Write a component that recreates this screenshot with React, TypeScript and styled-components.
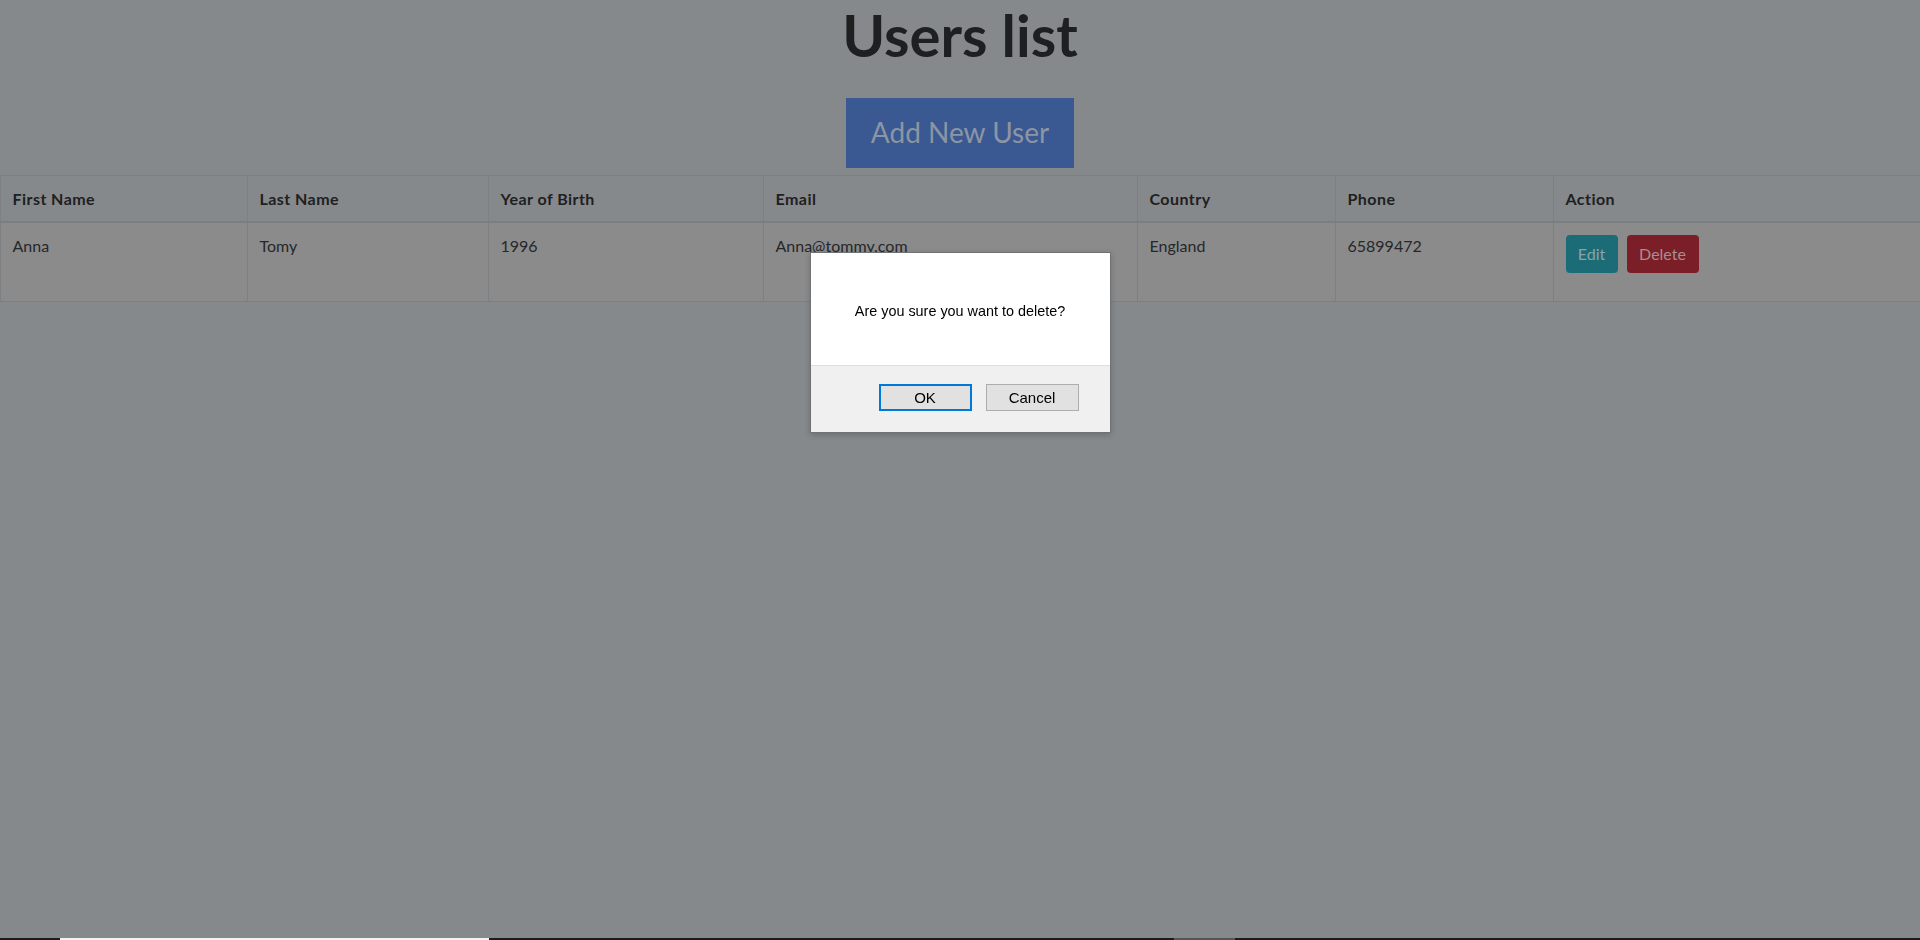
import React from "react";
import styled, { createGlobalStyle } from "styled-components";

const GlobalStyle = createGlobalStyle`
  html, body {
    margin: 0;
    padding: 0;
    background: #86898b;
  }
  * { box-sizing: border-box; }
`;

const Page = styled.div`
  min-height: 100vh;
  display: flex;
  flex-direction: column;
  font-family: Lato, "Open Sans", sans-serif;
  color: #1e2022;
  background: #86898b;
`;

const Main = styled.main`
  display: flex;
  flex-direction: column;
  align-items: center;
  flex: 1;
`;

const Title = styled.h1`
  margin: 0 0 28px;
  font-size: 58px;
  line-height: 1.2;
  font-weight: 700;
  color: #1d1f21;
`;

const AddButton = styled.button`
  width: 228px;
  height: 70px;
  padding: 0 0 2px;
  border: none;
  border-radius: 0;
  background: #3a5892;
  color: #8c95a3;
  font-family: Lato, "Open Sans", sans-serif;
  font-size: 28px;
  line-height: 1.5;
  margin-bottom: 7px;
`;

const Table = styled.table`
  width: 100%;
  border-collapse: collapse;
  table-layout: fixed;
  font-size: 16px;
  line-height: 24px;
`;

const HeadCell = styled.th`
  text-align: left;
  font-weight: 700;
  letter-spacing: 0.45px;
  padding: 11px 12px 10px;
  border: 1px solid #7c8082;
  border-bottom: 2px solid #7a7e80;
  background: #85898b;
  vertical-align: bottom;
`;

const BodyRow = styled.tr`
  background: #8b8b8b;
`;

const Cell = styled.td`
  padding: 11px 12px 12px;
  border: 1px solid #7c8082;
  vertical-align: top;
  color: #25272a;
`;

const Actions = styled.div`
  display: flex;
  gap: 9px;
  margin-top: 1px;
  margin-bottom: 16px;
`;

const ActionButton = styled.button<{ $variant: "edit" | "delete" }>`
  height: 38px;
  padding: 0 12px;
  border: none;
  border-radius: 4px;
  font-family: Lato, "Open Sans", sans-serif;
  font-size: 16px;
  line-height: 1.5;
  background: ${(p) => (p.$variant === "edit" ? "#1b6c77" : "#7b1e28")};
  color: ${(p) => (p.$variant === "edit" ? "#8aa3a8" : "#a98e91")};
  width: ${(p) => (p.$variant === "edit" ? "52px" : "72px")};
`;

const Overlay = styled.div`
  position: fixed;
  inset: 0;
  display: flex;
  justify-content: center;
  align-items: flex-start;
  padding-top: 252px;
`;

const Dialog = styled.div`
  width: 301px;
  height: 181px;
  display: flex;
  flex-direction: column;
  background: #ffffff;
  border: 1px solid #6f7274;
  box-shadow: 0 2px 6px rgba(0, 0, 0, 0.2);
  font-family: "Liberation Sans", Arial, sans-serif;
`;

const Message = styled.div`
  height: 112px;
  display: flex;
  align-items: center;
  justify-content: center;
  font-size: 14.4px;
  color: #000;
  padding-top: 4px;
`;

const Footer = styled.div`
  flex: 1;
  display: flex;
  justify-content: flex-end;
  align-items: flex-start;
  gap: 14px;
  padding: 18px 31px 0 0;
  background: #f0f0f0;
  border-top: 1px solid #dfdfdf;
`;

const DialogButton = styled.button<{ $focused?: boolean }>`
  width: 93px;
  height: 27px;
  padding: 0;
  background: #e1e1e1;
  border: ${(p) => (p.$focused ? "2px solid #0078d7" : "1px solid #adadad")};
  border-radius: 0;
  font-family: "Liberation Sans", Arial, sans-serif;
  font-size: 15px;
  color: #000;
`;

const Strip = styled.div`
  height: 2px;
  display: flex;
  background: #1c1c1c;
`;

const StripSegment = styled.div<{ $color: string; $width: number; $offset: number }>`
  width: ${(p) => p.$width}px;
  margin-left: ${(p) => p.$offset}px;
  background: ${(p) => p.$color};
`;

const columns = [
  { label: "First Name", width: 247 },
  { label: "Last Name", width: 241 },
  { label: "Year of Birth", width: 275 },
  { label: "Email", width: 374 },
  { label: "Country", width: 198 },
  { label: "Phone", width: 218 },
  { label: "Action", width: 367 },
];

const users = [
  {
    first: "Anna",
    last: "Tomy",
    year: "1996",
    email: "Anna@tommy.com",
    country: "England",
    phone: "65899472",
  },
];

export default function App() {
  return (
    <>
      <GlobalStyle />
      <Page>
        <Main>
          <Title>Users list</Title>
          <AddButton>Add New User</AddButton>
          <Table>
            <colgroup>
              {columns.map((c) => (
                <col key={c.label} style={{ width: c.width }} />
              ))}
            </colgroup>
            <thead>
              <tr>
                {columns.map((c) => (
                  <HeadCell key={c.label}>{c.label}</HeadCell>
                ))}
              </tr>
            </thead>
            <tbody>
              {users.map((u) => (
                <BodyRow key={u.email}>
                  <Cell>{u.first}</Cell>
                  <Cell>{u.last}</Cell>
                  <Cell>{u.year}</Cell>
                  <Cell>{u.email}</Cell>
                  <Cell>{u.country}</Cell>
                  <Cell>{u.phone}</Cell>
                  <Cell>
                    <Actions>
                      <ActionButton $variant="edit">Edit</ActionButton>
                      <ActionButton $variant="delete">Delete</ActionButton>
                    </Actions>
                  </Cell>
                </BodyRow>
              ))}
            </tbody>
          </Table>
        </Main>
        <Strip>
          <StripSegment $color="#f2f2f2" $width={429} $offset={60} />
          <StripSegment $color="#555555" $width={61} $offset={685} />
        </Strip>
      </Page>
      <Overlay>
        <Dialog role="alertdialog">
          <Message>Are you sure you want to delete?</Message>
          <Footer>
            <DialogButton $focused>OK</DialogButton>
            <DialogButton>Cancel</DialogButton>
          </Footer>
        </Dialog>
      </Overlay>
    </>
  );
}
